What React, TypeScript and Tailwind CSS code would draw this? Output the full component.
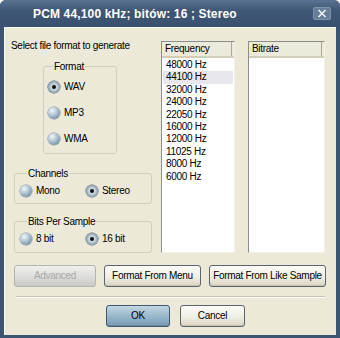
import type { ReactNode } from 'react'

const FREQS = ['48000 Hz', '44100 Hz', '32000 Hz', '24000 Hz', '22050 Hz', '16000 Hz', '12000 Hz', '11025 Hz', '8000 Hz', '6000 Hz']

function Radio({ label, checked }: { label: string; checked?: boolean }) {
  return (
    <div className="flex items-center h-[14px]">
      <span
        className={
          checked
            ? 'w-[12px] h-[12px] rounded-full flex items-center justify-center shadow-[0_0_0_0.5px_#41596c] bg-[radial-gradient(circle_at_50%_50%,#dfe6eb_0%,#c3d0da_40%,#6f889b_80%,#3c5264_100%)]'
            : 'w-[12px] h-[12px] rounded-full shadow-[0_0_0_0.5px_#6f8598] bg-[radial-gradient(circle_at_35%_30%,#f4f7f9_0%,#b3c6d4_40%,#7c98ad_75%,#55708a_100%)]'
        }
      >
        {checked && <span className="w-[4px] h-[4px] rounded-full bg-[#111]" />}
      </span>
      <span className="ml-[4px] leading-[12px]">{label}</span>
    </div>
  )
}

function Group({ title, className, legendClass, children }: { title: string; className: string; legendClass: string; children: ReactNode }) {
  return (
    <fieldset className={`border border-[#d0d0bf] rounded-[3px] ${className}`}>
      <legend className={`px-[1px] pt-[2px] leading-[12px] ${legendClass}`}>{title}</legend>
      {children}
    </fieldset>
  )
}

function ListBox({ title, width, items }: { title: string; width: string; items: string[] }) {
  return (
    <div className={`${width} h-[212px] bg-white border-l border-t border-[#8e8d88] border-r-[#f4f2e8] border-b-[#f4f2e8] border-r border-b flex flex-col`}>
      <div className="h-[16px] flex bg-[#ebeadb] border-b-[2px] border-[#d2cdb9]">
        <div className="flex-1 pl-[3px] leading-[14px] border-r border-[#aca899] mr-[2px]">{title}</div>
      </div>
      <div className="pt-[1px] px-[1px]">
        {items.map((f, i) => (
          <div key={f} className={`h-[12.4px] leading-[12.4px] pl-[3px] ${i === 1 ? 'bg-[#e8e7ee]' : ''}`}>
            {f}
          </div>
        ))}
      </div>
    </div>
  )
}

const btn = 'h-[22px] rounded-[3px] border flex items-center justify-center leading-none whitespace-nowrap'
const cream = 'border-[#5b6470] bg-[linear-gradient(#fbfaf5,#f1efe4_55%,#d9d3c3)] shadow-[inset_0_-1px_0_#c9c2ad]'

export default function App() {
  return (
    <div className="w-[340px] h-[338px] bg-[#3b5471] rounded-t-[6px] flex flex-col font-['Liberation_Sans',Arial,sans-serif] text-[10px] tracking-[-0.3px] whitespace-nowrap text-black overflow-hidden">
      <div className="h-[27px] flex items-center bg-[linear-gradient(#5a7392,#3e5775_40%,#3a526f)] px-[8px]">
        <div className="ml-[25px] text-white font-bold text-[12px] tracking-[0.15px]">PCM 44,100 kHz; bitów: 16 ; Stereo</div>
        <div className="ml-auto mr-[1px] w-[18px] h-[13px] bg-[#687e98] border border-[#7f93aa] rounded-[2px] flex items-center justify-center">
          <svg width="10" height="9" viewBox="0 0 10 9">
            <path d="M1.5 1 L8.5 8 M8.5 1 L1.5 8" stroke="#eef2f6" strokeWidth="1.6" />
          </svg>
        </div>
      </div>

      <div className="mx-[4px] h-[308px] bg-[#ece9d8] border-l border-t border-[#fbf9f0] flex flex-col">
        <div className="mt-[12px] flex pl-[9px]">
          <div className="w-[138px] flex flex-col">
            <p className="-ml-[3px] h-[12px] leading-[12px]">Select file format to generate</p>
            <Group title="Format" className="ml-[29px] w-[74px] mt-[7px] h-[95px] pl-[4px] pt-[7px]" legendClass="ml-[5px]">
              <div className="flex flex-col gap-[12px]">
                <Radio label="WAV" checked />
                <Radio label="MP3" />
                <Radio label="WMA" />
              </div>
            </Group>
            <Group title="Channels" className="mt-[12px] h-[38px] pl-[5px] pt-[4px]" legendClass="ml-[7px]">
              <div className="flex">
                <div className="w-[66px]"><Radio label="Mono" /></div>
                <Radio label="Stereo" checked />
              </div>
            </Group>
            <Group title="Bits Per Sample" className="mt-[10px] h-[39px] pl-[5px] pt-[4px]" legendClass="ml-[7px]">
              <div className="flex">
                <div className="w-[66px]"><Radio label="8 bit" /></div>
                <Radio label="16 bit" checked />
              </div>
            </Group>
          </div>
          <div className="ml-[9px] mt-[1px] flex gap-[13px]">
            <ListBox title="Frequency" width="w-[74px]" items={FREQS} />
            <ListBox title="Bitrate" width="w-[77px]" items={[]} />
          </div>
        </div>

        <div className="mt-[12px] flex gap-[8px] pl-[9px]">
          <div className={`${btn} w-[82px] border-[#b5b3ad] text-[#aaa9a4] bg-[linear-gradient(#f0f0ee,#dcdcda_55%,#c9c9c7)]`}>Advanced</div>
          <div className={`${btn} ${cream} w-[97px]`}>Format From Menu</div>
          <div className={`${btn} ${cream} w-[117px]`}>Format From Like Sample</div>
        </div>

        <div className="mt-[9px] mx-[11px] border-t border-[#c8c4b4] border-b border-b-white" />

        <div className="mt-[7px] flex gap-[10px] pl-[101px]">
          <div className={`${btn} w-[64px] h-[21px] border-[#3e5a72] bg-[linear-gradient(#c3d6e2,#9ab8cb_50%,#7799b1)] shadow-[inset_0_-1px_0_#6a8aa2]`}>OK</div>
          <div className={`${btn} ${cream} w-[65px] h-[21px]`}>Cancel</div>
        </div>
      </div>
    </div>
  )
}
